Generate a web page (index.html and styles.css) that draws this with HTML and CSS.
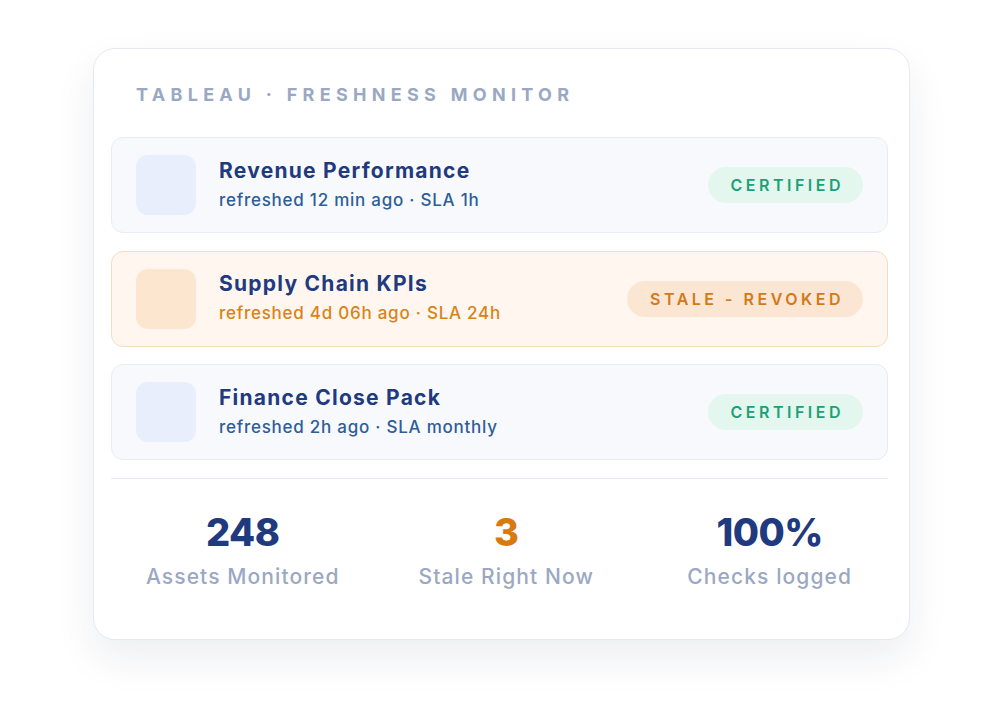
FILE: index.html
```html
<!DOCTYPE html>
<html>
<head>
<meta charset="utf-8">
<link rel="stylesheet" href="styles.css">
</head>
<body>
<div class="card">
  <div class="eyebrow">TABLEAU · FRESHNESS MONITOR</div>
  <div class="rows">
    <div class="row">
      <div class="thumb"></div>
      <div class="info">
        <div class="title">Revenue Performance</div>
        <div class="sub">refreshed 12 min ago · SLA 1h</div>
      </div>
      <div class="badge ok">CERTIFIED</div>
    </div>
    <div class="row stale">
      <div class="thumb"></div>
      <div class="info">
        <div class="title">Supply Chain KPIs</div>
        <div class="sub">refreshed 4d 06h ago · SLA 24h</div>
      </div>
      <div class="badge bad">STALE - REVOKED</div>
    </div>
    <div class="row">
      <div class="thumb"></div>
      <div class="info">
        <div class="title">Finance Close Pack</div>
        <div class="sub">refreshed 2h ago · SLA monthly</div>
      </div>
      <div class="badge ok">CERTIFIED</div>
    </div>
  </div>
  <div class="stats">
    <div class="stat">
      <div class="num">248</div>
      <div class="label">Assets Monitored</div>
    </div>
    <div class="stat">
      <div class="num warn">3</div>
      <div class="label">Stale Right Now</div>
    </div>
    <div class="stat">
      <div class="num">100%</div>
      <div class="label">Checks logged</div>
    </div>
  </div>
</div>
</body>
</html>
```

FILE: styles.css
```css
* { box-sizing: border-box; }
html, body { margin: 0; padding: 0; background: #ffffff; }
body {
  width: 1000px;
  height: 707px;
  font-family: Inter, "Noto Sans", sans-serif;
  padding: 48px 0 0 93px;
}
.card {
  width: 817px;
  height: 592px;
  background: #ffffff;
  border: 1px solid #e6e9f1;
  border-radius: 22px;
  box-shadow: 0 18px 40px rgba(30, 40, 80, 0.08);
  padding: 0 21px 0 17px;
}
.eyebrow {
  padding: 35px 0 0 25px;
  height: 88px;
  font-size: 18px;
  font-weight: 700;
  letter-spacing: 5.3px;
  color: #9aa8c3;
}
.rows {
  display: flex;
  flex-direction: column;
  gap: 17.5px;
}
.row {
  display: flex;
  align-items: center;
  height: 96px;
  padding: 0 24px;
  background: #f7f9fd;
  border: 1px solid #e8ecf4;
  border-radius: 12px;
}
.row.stale {
  background: #fff6f0;
  border-color: #f5dcbf;
}
.thumb {
  width: 60px;
  height: 60px;
  border-radius: 12px;
  background: #e9eefc;
  flex: none;
}
.stale .thumb { background: #fde6cf; }
.info {
  flex: 1;
  margin-left: 23px;
}
.title {
  font-size: 21px;
  font-weight: 700;
  color: #1f3a7e;
  letter-spacing: 1.25px;
  line-height: 26px;
}
.sub {
  font-size: 17px;
  font-weight: 500;
  color: #2e5d98;
  line-height: 26px;
  margin-top: 3px;
  letter-spacing: 0.75px;
}
.stale .sub { color: #d98316; }
.badge {
  height: 36px;
  line-height: 36px;
  border-radius: 18px;
  padding: 0 19px 0 23px;
  font-size: 16px;
  font-weight: 600;
  letter-spacing: 3.5px;
}
.badge.ok { background: #e3f7ee; color: #1e9f77; }
.badge.bad { background: #fbe6d3; color: #d2791a; }
.stats {
  margin-top: 18px;
  border-top: 1px solid #e8ebf2;
  display: grid;
  grid-template-columns: repeat(3, 263.5px);
  padding-top: 31px;
}
.stat { text-align: center; }
.num {
  font-size: 38px;
  font-weight: 800;
  color: #1f3a7e;
  line-height: 44px;
  letter-spacing: -0.5px;
}
.num.warn { color: #d97a10; }
.label {
  margin-top: 10px;
  font-size: 21px;
  font-weight: 500;
  color: #9aa8c3;
  line-height: 26px;
  letter-spacing: 1.1px;
}
```
